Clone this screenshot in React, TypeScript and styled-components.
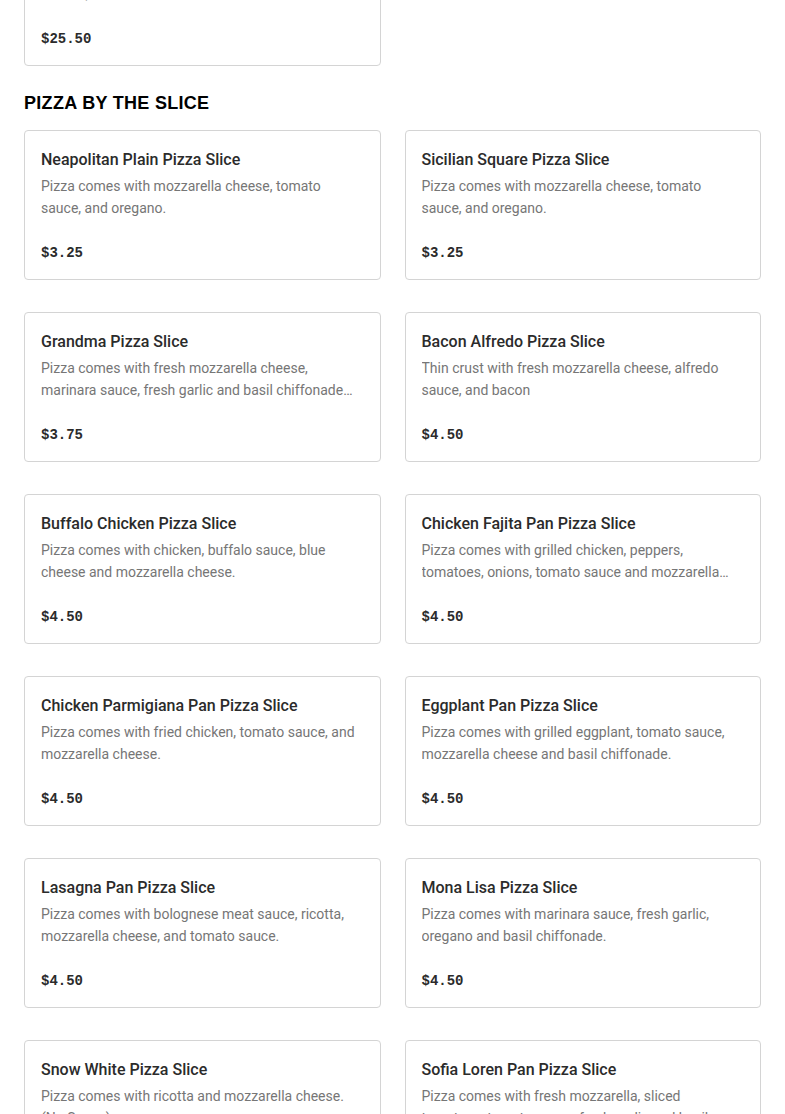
import React from "react";
import styled, { createGlobalStyle } from "styled-components";

const GlobalStyle = createGlobalStyle`
  html, body { margin: 0; padding: 0; background: #ffffff; }
  body { font-family: Roboto, "Liberation Sans", sans-serif; overflow: hidden; }
  * { box-sizing: border-box; }
`;

type Item = { name: string; desc: string; price: string };

const previous: Item = {
  name: "Large Specialty Pizza",
  desc: "Pizza comes with fresh mozzarella cheese, tomato sauces, and basil.",
  price: "$25.50",
};

const slices: Item[] = [
  { name: "Neapolitan Plain Pizza Slice", desc: "Pizza comes with mozzarella cheese, tomato sauce, and oregano.", price: "$3.25" },
  { name: "Sicilian Square Pizza Slice", desc: "Pizza comes with mozzarella cheese, tomato sauce, and oregano.", price: "$3.25" },
  { name: "Grandma Pizza Slice", desc: "Pizza comes with fresh mozzarella cheese, marinara sauce, fresh garlic and basil chiffonade and a drizzle of olive oil.", price: "$3.75" },
  { name: "Bacon Alfredo Pizza Slice", desc: "Thin crust with fresh mozzarella cheese, alfredo sauce, and bacon", price: "$4.50" },
  { name: "Buffalo Chicken Pizza Slice", desc: "Pizza comes with chicken, buffalo sauce, blue cheese and mozzarella cheese.", price: "$4.50" },
  { name: "Chicken Fajita Pan Pizza Slice", desc: "Pizza comes with grilled chicken, peppers, tomatoes, onions, tomato sauce and mozzarella cheese.", price: "$4.50" },
  { name: "Chicken Parmigiana Pan Pizza Slice", desc: "Pizza comes with fried chicken, tomato sauce, and mozzarella cheese.", price: "$4.50" },
  { name: "Eggplant Pan Pizza Slice", desc: "Pizza comes with grilled eggplant, tomato sauce, mozzarella cheese and basil chiffonade.", price: "$4.50" },
  { name: "Lasagna Pan Pizza Slice", desc: "Pizza comes with bolognese meat sauce, ricotta, mozzarella cheese, and tomato sauce.", price: "$4.50" },
  { name: "Mona Lisa Pizza Slice", desc: "Pizza comes with marinara sauce, fresh garlic, oregano and basil chiffonade.", price: "$4.50" },
  { name: "Snow White Pizza Slice", desc: "Pizza comes with ricotta and mozzarella cheese. (No Sauce)", price: "$4.50" },
  { name: "Sofia Loren Pan Pizza Slice", desc: "Pizza comes with fresh mozzarella, sliced tomatoes, tomato sauce, fresh garlic and basil chiffonade.", price: "$4.50" },
];

const Page = styled.main`
  padding: 0 24px;
  margin-top: -84px;
`;

const Section = styled.section`
  display: flex;
  flex-direction: column;
`;

const SectionTitle = styled.h2`
  margin: 25px 0 15px;
  font-family: "Liberation Sans", Arial, sans-serif;
  font-weight: 700;
  font-size: 18px;
  line-height: 24px;
  color: #000000;
  text-transform: uppercase;
  letter-spacing: 0.3px;
`;

const Grid = styled.div`
  display: grid;
  grid-template-columns: 1fr 1fr;
  column-gap: 24px;
  row-gap: 32px;
`;

const Card = styled.article`
  border: 1px solid #d4d4d4;
  border-radius: 4px;
  padding: 17px 16px 15px;
  display: flex;
  flex-direction: column;
  background: #ffffff;
`;

const Name = styled.h3`
  margin: 0;
  font-family: Roboto, "Liberation Sans", sans-serif;
  font-weight: 500;
  font-size: 16px;
  line-height: 24px;
  color: #2b2b2b;
`;

const Desc = styled.p`
  margin: 3px 0 0;
  font-family: Roboto, "Liberation Sans", sans-serif;
  font-size: 14px;
  line-height: 22px;
  height: 44px;
  color: #767676;
  display: -webkit-box;
  -webkit-line-clamp: 2;
  -webkit-box-orient: vertical;
  overflow: hidden;
`;

const Price = styled.span`
  margin-top: 23px;
  font-family: "Liberation Mono", "DejaVu Sans Mono", monospace;
  font-weight: 700;
  font-size: 14px;
  line-height: 22px;
  color: #2b2b2b;
`;

const MenuCard = ({ item }: { item: Item }) => (
  <Card>
    <Name>{item.name}</Name>
    <Desc>{item.desc}</Desc>
    <Price>{item.price}</Price>
  </Card>
);

export default function App() {
  return (
    <>
      <GlobalStyle />
      <Page>
        <Section>
          <Grid>
            <MenuCard item={previous} />
          </Grid>
        </Section>
        <Section>
          <SectionTitle>Pizza by the Slice</SectionTitle>
          <Grid>
            {slices.map((s) => (
              <MenuCard key={s.name} item={s} />
            ))}
          </Grid>
        </Section>
      </Page>
    </>
  );
}
